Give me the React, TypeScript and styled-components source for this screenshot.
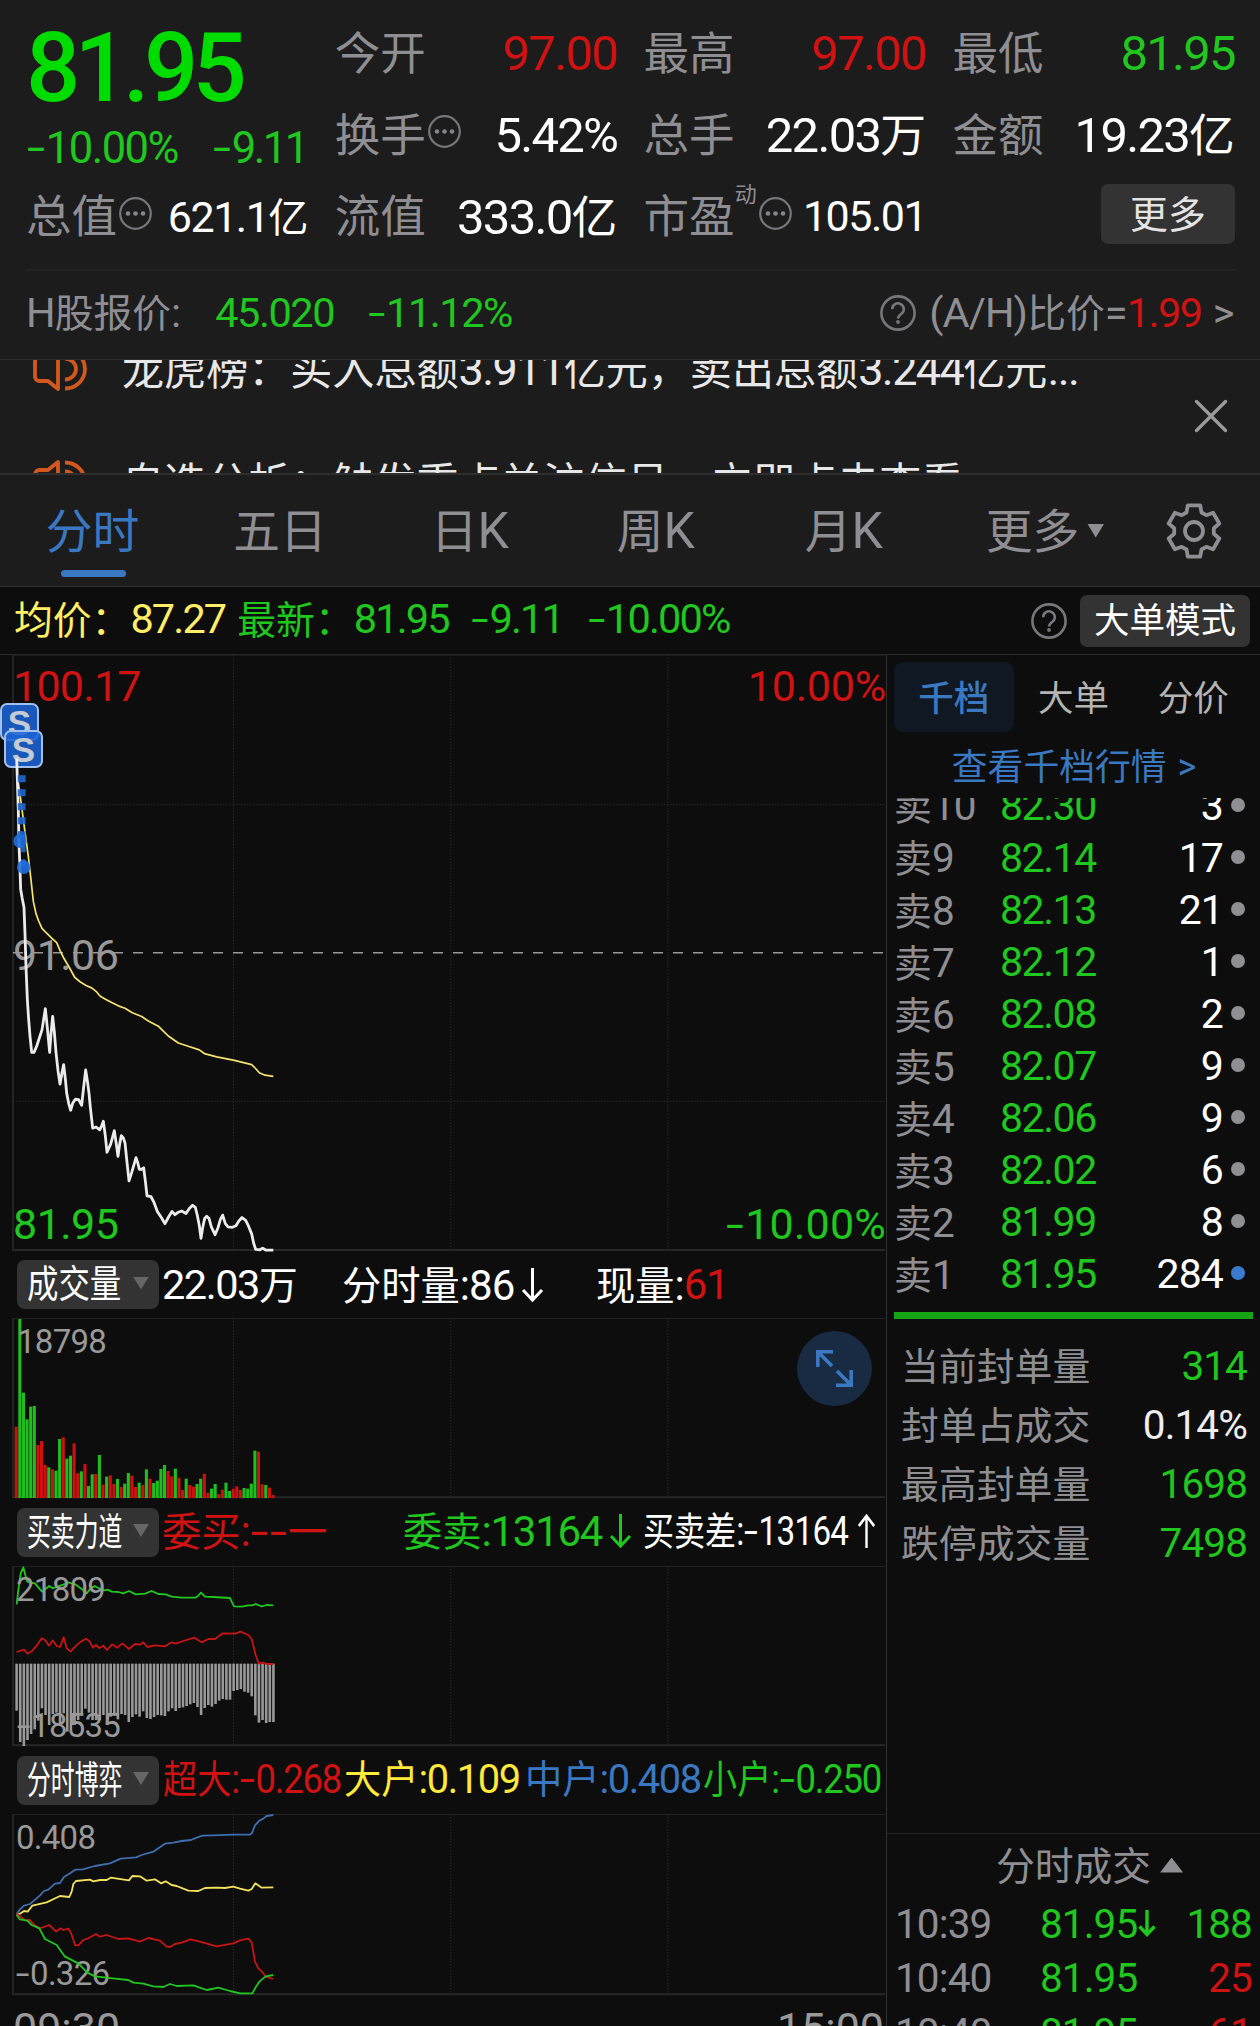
import React from "react";
import styled, { createGlobalStyle } from "styled-components";

const C = {
  head: "#1c1c1c",
  body: "#0d0d0d",
  gray: "#8e8e93",
  label: "#999999",
  red: "#d01212",
  green: "#1fc71f",
  blue: "#3a78c2",
  yellow: "#ffe93b",
  white: "#ffffff",
  line: "#2b2b2b",
  chip: "#333333",
};

const Global = createGlobalStyle`
  html, body { margin: 0; background: ${C.body}; }
  body { font-family: Roboto, "Noto Sans CJK SC", sans-serif; overflow: hidden; }
  * { box-sizing: border-box; }
`;

/* ---------- text ---------- */

const Txt = styled.span<{ $s: number; $c?: string; $ls?: number; $w?: number; $k?: number }>`
  display: inline-block;
  white-space: pre;
  line-height: 1;
  font-size: ${(p) => p.$s}px;
  color: ${(p) => p.$c || C.white};
  font-weight: ${(p) => p.$w || 400};
  letter-spacing: ${(p) => p.$ls ?? -0.035}em;
  ${(p) => (p.$k ? `transform: scaleX(${p.$k}); transform-origin: 0 50%;` : "")}
`;
const Han = styled.span`
  font-family: "Noto Sans CJK SC", sans-serif;
  font-size: 0.935em;
  letter-spacing: 0;
`;
const Dash = styled.span`
  display: inline-block;
  letter-spacing: 0;
  transform: scaleX(1.5);
  margin: 0 0.09em;
`;

type TProps = { children: string; s: number; c?: string; ls?: number; w?: number; k?: number };
function T({ children, s, c, ls, w, k }: TProps) {
  const parts = children.split(/([\u3000-\u9fff\uff00-\uffef]+|-)/).filter(Boolean);
  return (
    <Txt $s={s} $c={c} $ls={ls} $w={w} $k={k}>
      {parts.map((p, i) =>
        p === "-" ? <Dash key={i}>-</Dash> : /[\u3000-\uffef]/.test(p) ? <Han key={i}>{p}</Han> : p
      )}
    </Txt>
  );
}

/* ---------- icons ---------- */

const Svg = styled.svg`
  display: block;
  flex: none;
  overflow: visible;
`;

const MoreDots = () => (
  <Svg width="33" height="33" viewBox="0 0 33 33">
    <circle cx="16.5" cy="16.5" r="15.3" fill="none" stroke="#77777b" strokeWidth="2.2" />
    {[9, 16.5, 24].map((x) => (
      <circle key={x} cx={x} cy="16.5" r="2.3" fill="#85858a" />
    ))}
  </Svg>
);
const Question = () => (
  <Svg width="36" height="36" viewBox="0 0 36 36" fill="none" stroke="#77777b" strokeWidth="2.6">
    <circle cx="18" cy="18" r="16.6" />
    <path d="M12.2 14.2a5.8 5.8 0 1 1 9 4.8c-2 1.4-3.1 2.2-3.1 4.4" />
    <circle cx="18" cy="27" r="1.2" fill="#77777b" strokeWidth="1.4" />
  </Svg>
);
const Speaker = () => (
  <Svg width="56" height="46" viewBox="0 0 56 46" fill="none" stroke="#d2591e" strokeWidth="3.8" strokeLinejoin="round">
    <path d="M26 3v40l-10-8H7.500a4.500 4.500 0 0 1-4.500-4.500v-15a4.500 4.500 0 0 1 4.500-4.500H16z" />
    <path d="M33 12.500a11 10.500 0 0 1 0 21M33 3.500a20 19.500 0 0 1 0 39" />
  </Svg>
);
const Close = () => (
  <Svg width="32" height="32" viewBox="0 0 32 32" stroke="#999" strokeWidth="3.400" strokeLinecap="round">
    <path d="M1.500 1.500l29 29M30.500 1.500l-29 29" />
  </Svg>
);
const gearPath = (() => {
  const pts: string[] = [];
  for (let i = 0; i < 6; i++) {
    ([[-22, 20], [-13.5, 26.4], [13.5, 26.4], [22, 20]] as const).forEach(([d, r]) => {
      const a = ((i * 60 + d - 90) * Math.PI) / 180;
      pts.push(`${(29 + r * Math.cos(a)).toFixed(1)} ${(29 + r * Math.sin(a)).toFixed(1)}`);
    });
  }
  return `M${pts.join("L")}Z`;
})();
const Gear = () => (
  <Svg width="58" height="58" viewBox="0 0 58 58" fill="none" stroke={C.gray} strokeWidth="3.800">
    <path d={gearPath} strokeLinejoin="round" />
    <circle cx="29" cy="29" r="9" />
  </Svg>
);
const Arrow = ({ up, c, w = 21 }: { up?: boolean; c: string; w?: number }) => (
  <Svg width={w} height="34" viewBox="0 0 21 34" preserveAspectRatio="none" fill="none" stroke={c} strokeWidth="3">
    <path d={up ? "M10.500 34V2M1 12l9.500-10L20 12" : "M10.500 0v32M1 22l9.500 10L20 22"} />
  </Svg>
);
const SmallArrow = () => (
  <Svg width="18" height="27" viewBox="0 0 18 27" fill="none" stroke={C.green} strokeWidth="3.400">
    <path d="M9 0v24M1.500 16.500L9 24.500l7.500-8" />
  </Svg>
);
const Tri = styled.i<{ $w: number; $h: number; $c: string; $up?: boolean }>`
  flex: none;
  width: ${(p) => p.$w}px;
  height: ${(p) => p.$h}px;
  background: ${(p) => p.$c};
  clip-path: ${(p) => (p.$up ? "polygon(50% 0, 100% 100%, 0 100%)" : "polygon(0 0, 100% 0, 50% 100%)")};
`;

/* ---------- quote header ---------- */

const Page = styled.div`
  width: 1260px;
  height: 2026px;
  overflow: hidden;
  background: ${C.body};
`;
const Header = styled.header`
  height: 359px;
  padding: 13px 25px 0 26px;
  background: ${C.head};
`;
const Quote = styled.div`
  display: grid;
  grid-template-columns: repeat(4, 282.500px);
  column-gap: 26.300px;
  grid-template-rows: repeat(3, 81.500px);
`;
const PriceBlock = styled.div`
  grid-row: span 2;
`;
const BigPrice = styled.div`
  height: 108px;
  padding-top: 3px;
  display: flex;
  align-items: center;
`;
const Change = styled.div`
  height: 55px;
  display: flex;
  align-items: center;
  gap: 34px;
`;
const Metric = styled.div`
  display: flex;
  align-items: center;
  justify-content: space-between;
`;
const MetricName = styled.div`
  display: flex;
  align-items: center;
  svg { margin: -7px 0 0 2px; }
`;
const Sup = styled.div`
  margin: -44px 0 0 0;
  & + svg { margin-left: 2px; }
`;
const MoreCell = styled.div`
  display: flex;
  justify-content: flex-end;
  align-items: center;
  padding-bottom: 5px;
`;
const Button = styled.button<{ $w: number; $h: number }>`
  display: flex;
  align-items: center;
  justify-content: center;
  width: ${(p) => p.$w}px;
  height: ${(p) => p.$h}px;
  padding: 0 0 2px;
  border: 0;
  border-radius: 7px;
  background: ${C.chip};
`;
const HShare = styled.div`
  display: flex;
  align-items: center;
  height: 86px;
  margin-top: 11px;
  padding-right: 2px;
  border-top: 2px solid #232323;
`;
const Gap = styled.i<{ $w: number }>`
  flex: none;
  width: ${(p) => p.$w}px;
`;
const Push = styled.i`
  flex: 1;
`;

/* ---------- ticker ---------- */

const Ticker = styled.div`
  display: flex;
  justify-content: space-between;
  height: 114px;
  overflow: hidden;
  background: ${C.head};
  border-top: 1px solid ${C.line};
`;
const TickerList = styled.div`
  margin-top: -47px;
`;
const TickerItem = styled.div`
  display: flex;
  align-items: center;
  gap: 34px;
  height: 112.500px;
  padding-left: 32px;
`;
const CloseBox = styled.div`
  display: flex;
  align-items: center;
  padding: 0 33px 2px 0;
`;

/* ---------- period tabs ---------- */

const Tabs = styled.nav`
  display: flex;
  height: 114px;
  background: ${C.head};
  border-top: 2px solid #2e2e2e;
  border-bottom: 1px solid #303030;
  padding-left: 20px;
`;
const Tab = styled.div<{ $w: number }>`
  position: relative;
  display: flex;
  flex: none;
  align-items: center;
  justify-content: center;
  gap: 8px;
  width: ${(p) => p.$w}px;
`;
const Underline = styled.i`
  position: absolute;
  left: 41px;
  bottom: 9px;
  width: 65px;
  height: 7px;
  border-radius: 4px;
  background: ${C.blue};
`;
const Summary = styled.div`
  display: flex;
  align-items: center;
  height: 67px;
  padding: 0 10px 0 14px;
`;
const SummaryText = styled.div`
  display: flex;
  padding-bottom: 2px;
`;

/* ---------- body ---------- */

const Body = styled.main`
  display: flex;
  height: 1372px;
  border-top: 1px solid ${C.line};
`;
const Charts = styled.section`
  width: 886px;
`;
const Plot = styled.div<{ $h: number }>`
  position: relative;
  height: ${(p) => p.$h}px;
`;
const PlotLabel = styled.div<{ $y: number; $right?: boolean; $x?: number }>`
  position: absolute;
  top: ${(p) => p.$y}px;
  ${(p) => (p.$right ? "right: 0;" : `left: ${p.$x ?? 13}px;`)}
  display: flex;
  align-items: center;
  height: 40px;
  margin-top: -20px;
`;
const Badge = styled.div<{ $x: number; $y: number }>`
  position: absolute;
  left: ${(p) => p.$x}px;
  top: ${(p) => p.$y}px;
  display: flex;
  align-items: center;
  justify-content: center;
  width: 39px;
  height: 38px;
  border: 2px solid #a3c0ea;
  border-radius: 7px;
  background: rgba(28, 100, 212, 0.87);
  color: #c4cbd4;
  font: bold 35px/1 "Liberation Sans", sans-serif;
`;
const Expand = styled.button`
  position: absolute;
  right: 14px;
  top: 13px;
  display: flex;
  align-items: center;
  justify-content: center;
  width: 75px;
  height: 75px;
  padding: 0;
  border: 0;
  border-radius: 50%;
  background: #192b43;
`;
const InfoRow = styled.div<{ $h: number }>`
  display: flex;
  align-items: center;
  height: ${(p) => p.$h}px;
  padding-left: 17px;
`;
const Chip = styled.div`
  display: flex;
  align-items: center;
  justify-content: space-between;
  flex: none;
  width: 142px;
  height: 49px;
  padding: 0 10px 3px 10px;
  border-radius: 8px;
  background: ${C.chip};
`;
const ChipText = styled.div`
  width: 96px;
  display: flex;
`;
const Segment = styled.div<{ $w: number; $drop?: number }>`
  display: flex;
  align-items: center;
  flex: none;
  width: ${(p) => p.$w}px;
  padding-bottom: ${(p) => 3 - (p.$drop ?? 0)}px;
`;
const Axis = styled.div`
  display: flex;
  justify-content: space-between;
  height: 32px;
  overflow: hidden;
  padding: 13px 2px 0 13px;
`;

/* ---------- order book ---------- */

const Side = styled.aside`
  flex: 1;
  display: flex;
  flex-direction: column;
  overflow: hidden;
  border-left: 1px solid #333;
  & > * { flex: none; }
`;
const BookTabs = styled.div`
  display: flex;
  padding: 7px 7px 0;
`;
const BookTab = styled.div<{ $on?: boolean }>`
  flex: 1;
  display: flex;
  align-items: center;
  justify-content: center;
  height: 70px;
  padding-top: 1px;
  border-radius: 9px;
  background: ${(p) => (p.$on ? "#101923" : "transparent")};
`;
const BookLink = styled.div`
  display: flex;
  align-items: center;
  justify-content: center;
  gap: 11px;
  height: 66px;
  padding-top: 3px;
`;
const Book = styled.div`
  display: flex;
  flex-direction: column;
  justify-content: flex-end;
  height: 502.500px;
  overflow: hidden;
`;
const BookRow = styled.div`
  display: grid;
  grid-template-columns: 106px 1fr auto 15px;
  column-gap: 0;
  align-items: center;
  flex: none;
  height: 52.040px;
  padding: 0 15px 0 7px;
`;
const Dot = styled.i<{ $c: string }>`
  justify-self: end;
  width: 14px;
  height: 14px;
  border-radius: 50%;
  margin-top: -3px;
  background: ${(p) => p.$c};
`;
const Qty = styled.div`
  padding-right: 7px;
`;
const SellBar = styled.div`
  height: 7px;
  margin: 11px 7px 0;
  background: #16a316;
`;
const Stats = styled.div`
  padding: 18px 13px 0 14px;
  height: 514px;
`;
const StatRow = styled.div`
  display: flex;
  align-items: center;
  justify-content: space-between;
  height: 59px;
`;
const TradesHead = styled.div`
  display: flex;
  align-items: center;
  justify-content: center;
  gap: 9px;
  height: 64px;
  padding-left: 46px;
  padding-right: 14px;
  border-top: 1px solid #252525;
`;
const TradeRow = styled.div`
  display: grid;
  grid-template-columns: 145px 98px 1fr auto;
  align-items: center;
  height: 54.800px;
  padding: 0 8px 0 8px;
`;

/* ---------- chart data ---------- */

const PRICE =
  "50,290 52,340 55,420 57,500 60,560 62,610 66,630 72,655 75,720 78,800 82,880 86,930 90,970 95,1010 102,1010 110,995 118,975 126,955 136,903 142,950 149,1010 153,965 158,922 163,960 168,1010 174,1055 180,1088 186,1060 191,1040 196,1075 200,1110 206,1135 212,1152 218,1135 226,1125 236,1126 245,1140 251,1095 257,1053 263,1085 267,1110 271,1145 278,1196 288,1193 299,1200 305,1190 310,1179 316,1215 321,1255 332,1235 343,1202 349,1235 354,1265 359,1235 364,1214 370,1220 375,1232 381,1280 387,1325 395,1305 402,1285 408,1268 413,1280 418,1297 424,1297 431,1293 436,1325 441,1362 453,1364 462,1378 472,1400 484,1415 495,1430 506,1413 516,1400 525,1408 535,1402 545,1399 558,1405 568,1393 578,1385 586,1390 592,1410 598,1435 603,1466 608,1440 614,1417 620,1412 627,1417 634,1438 645,1457 654,1440 661,1420 668,1409 676,1430 684,1438 697,1439 708,1435 716,1424 726,1415 737,1422 745,1435 755,1455 761,1478 767,1493 780,1494 788,1490 798,1495 820,1495";
const AVG =
  "50,320 62,390 75,470 85,530 92,580 100,640 108,670 116,688 126,706 140,718 155,730 170,741 180,760 192,780 208,802 224,826 240,837 258,846 275,852 290,862 300,872 315,879 335,888 355,896 375,902 397,913 425,922 445,933 475,946 490,958 505,970 535,987 560,994 598,1004 613,1013 650,1021 700,1029 755,1040 766,1049 778,1060 795,1066 820,1069";
const SELL =
  "50,343 55,300 62,250 70,232 76,255 82,275 92,278 105,280 115,292 126,305 136,297 148,288 158,295 172,290 190,284 205,277 225,283 240,293 260,310 270,297 284,288 300,297 315,301 322,299 335,305 355,306 370,310 387,303 407,313 435,311 455,303 475,312 497,313 515,320 545,323 586,323 595,317 603,308 615,320 640,321 690,324 695,335 702,349 725,350 745,346 757,346 767,342 785,349 800,345 820,346";
const BUY =
  "50,486 72,479 83,491 97,482 110,467 125,445 135,450 147,467 158,451 170,468 180,471 191,442 200,475 212,485 225,470 240,457 258,446 268,453 279,473 288,465 298,474 310,467 321,480 336,463 352,473 367,460 387,477 405,462 420,464 430,457 442,471 465,466 495,469 515,457 528,461 550,453 583,443 605,457 625,447 645,447 668,430 705,431 722,425 745,435 755,447 767,495 776,520 790,518 800,522 820,522";
const MID =
  "50,522 60,508 72,497 90,492 102,482 120,466 132,453 145,449 165,431 180,429 192,411 210,400 226,389 248,388 285,378 330,370 362,356 408,352 425,345 460,335 475,325 495,311 520,308 545,303 573,300 590,293 608,287 640,286 700,284 750,284 756,279 765,256 778,242 790,236 800,228 820,225";
const BIG =
  "50,525 62,520 72,513 83,515 97,497 140,487 180,468 208,471 215,455 220,432 228,423 270,419 280,424 300,420 320,420 332,413 387,421 397,408 420,409 440,422 465,418 483,430 497,424 515,435 530,438 565,452 595,453 615,444 650,443 675,444 700,440 720,446 745,452 755,447 766,430 785,443 820,442";
const HUGE =
  "50,520 66,533 75,541 90,540 105,557 120,565 148,555 168,575 182,565 190,570 205,566 213,578 225,615 235,616 250,600 265,595 288,582 300,590 320,585 355,597 385,595 420,605 445,594 480,602 500,620 510,621 525,612 545,608 572,598 600,605 650,619 700,610 720,601 745,596 755,607 765,665 775,685 788,697 797,710 820,717";
const SMALL =
  "50,525 60,538 82,542 95,555 118,565 135,597 170,615 195,650 235,670 262,698 285,709 345,716 385,720 400,728 430,731 460,739 490,741 510,732 530,738 580,736 620,750 655,743 690,753 720,760 757,760 765,745 778,725 797,709 820,705";

const VOLUME =
  "r560 g237 g458 g538 g500 g498 r615 r603 r675 g682 r688 g692 g597 r592 g656 g647 r610 r700 g694 r672 g738 g703 r702 g645 r734 g710 r706 r732 g717 r741 g731 g699 r707 r741 g728 r735 g688 r716 g729 g722 g687 g675 r693 r709 g686 r713 r750 g716 r735 r740 g732 g716 r701 r758 g746 g732 r762 r749 g728 g753 r746 r739 r750 g744 g746 g731 g632 r635 r733 g735 r743 r765".split(" ");
const DIFF = [
  662, 756, 768, 750, 732, 718, 692, 655, 675, 705, 672, 668, 700, 670, 725, 722, 705, 690, 670, 656, 668, 690, 690, 690,
  675, 703, 680, 670, 688, 672, 675, 696, 681, 673, 680, 664, 684, 687, 681, 675, 676, 678, 664, 655, 663, 654, 652, 648,
  643, 639, 651, 675, 654, 645, 650, 642, 632, 627, 629, 629, 603, 600, 597, 605, 608, 619, 676, 698, 690, 699, 696, 696,
];

const Canvas = styled.svg`
  position: absolute;
  inset: 0;
  width: 886px;
  height: 100%;
  overflow: visible;
  polyline, line { vector-effect: non-scaling-stroke; fill: none; }
  polyline { stroke-linejoin: round; }
`;

function Frame({ y0, y1, rows = [] }: { y0: number; y1: number; rows?: number[] }) {
  return (
    <g stroke="#2a2a2a" strokeWidth="1">
      <line x1="39" x2="39" y1={y0} y2={y1} strokeWidth="2" stroke="#232323" />
      <line x1="39" x2="2655" y1={y0 + 1.5} y2={y0 + 1.5} stroke="#222" />
      <line x1="39" x2="2655" y1={y1 - 2.5} y2={y1 - 2.5} strokeWidth="2" stroke="#272727" />
      {[700.5, 1352.5, 2003.5].map((x) => (
        <line key={x} x1={x} x2={x} y1={y0} y2={y1} strokeDasharray="1.500 1.500" />
      ))}
      {rows.map((y) => (
        <line key={y} x1="39" x2="2655" y1={y} y2={y} strokeDasharray="1.500 1.500" />
      ))}
    </g>
  );
}

const asks: [string, string, string][] = [
  ["卖10", "82.30", "3"],
  ["卖9", "82.14", "17"],
  ["卖8", "82.13", "21"],
  ["卖7", "82.12", "1"],
  ["卖6", "82.08", "2"],
  ["卖5", "82.07", "9"],
  ["卖4", "82.06", "9"],
  ["卖3", "82.02", "6"],
  ["卖2", "81.99", "8"],
  ["卖1", "81.95", "284"],
];
const stats: [string, string, string][] = [
  ["当前封单量", "314", C.green],
  ["封单占成交", "0.14%", "#eeeeee"],
  ["最高封单量", "1698", C.green],
  ["跌停成交量", "7498", C.green],
];
const trades: [string, string, boolean, string, string][] = [
  ["10:39", "81.95", true, "188", C.green],
  ["10:40", "81.95", false, "25", C.red],
  ["10:40", "81.95", false, "61", C.red],
];

function IndicatorChip({ name, k }: { name: string; k: number }) {
  return (
    <Chip>
      <ChipText>
        <T s={40.5} k={k}>{name}</T>
      </ChipText>
      <Tri $w={16} $h={13} $c="#666" />
    </Chip>
  );
}

export default function App() {
  return (
    <Page>
      <Global />
      <Header>
        <Quote>
          <PriceBlock>
            <BigPrice>
              <T s={95.5} c="#00dc00" w={500} ls={-0.06}>81.95</T>
            </BigPrice>
            <Change>
              <T s={43.5} c={C.green}>-10.00%</T>
              <T s={43.5} c={C.green} ls={-0.055}>-9.11</T>
            </Change>
          </PriceBlock>
          <Metric>
            <T s={48.7} c={C.gray}>今开</T>
            <T s={49} c={C.red}>97.00</T>
          </Metric>
          <Metric>
            <T s={48.7} c={C.gray}>最高</T>
            <T s={49} c={C.red}>97.00</T>
          </Metric>
          <Metric>
            <T s={48.7} c={C.gray}>最低</T>
            <T s={49} c={C.green}>81.95</T>
          </Metric>
          <Metric>
            <MetricName>
              <T s={48.7} c={C.gray}>换手</T>
              <MoreDots />
            </MetricName>
            <T s={49}>5.42%</T>
          </Metric>
          <Metric>
            <T s={48.7} c={C.gray}>总手</T>
            <T s={49}>22.03万</T>
          </Metric>
          <Metric>
            <T s={48.7} c={C.gray}>金额</T>
            <T s={49}>19.23亿</T>
          </Metric>
          <Metric>
            <MetricName>
              <T s={48.7} c={C.gray}>总值</T>
              <MoreDots />
            </MetricName>
            <T s={43}>621.1亿</T>
          </Metric>
          <Metric>
            <T s={48.7} c={C.gray}>流值</T>
            <T s={49}>333.0亿</T>
          </Metric>
          <Metric>
            <MetricName>
              <T s={48.7} c={C.gray}>市盈</T>
              <Sup>
                <T s={23.5} c={C.gray}>动</T>
              </Sup>
              <MoreDots />
            </MetricName>
            <T s={43}>105.01</T>
          </Metric>
          <MoreCell>
            <Button $w={134} $h={60}>
              <T s={40.5} c="#e4e4e4">更多</T>
            </Button>
          </MoreCell>
        </Quote>
        <HShare>
          <T s={41.5} c={C.gray} ls={-0.022}>H股报价:</T>
          <Gap $w={35} />
          <T s={41.5} c={C.green}>45.020</T>
          <Gap $w={33} />
          <T s={41.5} c={C.green}>-11.12%</T>
          <Push />
          <Question />
          <Gap $w={13} />
          <T s={41.5} c={C.gray} ls={-0.022}>(A/H)比价=</T>
          <T s={41.5} c={C.red}>1.99</T>
          <Gap $w={11} />
          <T s={41.5} c={C.gray}>&gt;</T>
        </HShare>
      </Header>

      <Ticker>
        <TickerList>
          <TickerItem>
            <Speaker />
            <T s={45} c="#e8e8e8">龙虎榜：买入总额3.911亿元，卖出总额3.244亿元...</T>
          </TickerItem>
          <TickerItem>
            <Speaker />
            <T s={45} c="#e8e8e8">自选分析：触发重点关注信号，立即点击查看</T>
          </TickerItem>
        </TickerList>
        <CloseBox>
          <Close />
        </CloseBox>
      </Ticker>

      <Tabs>
        <Tab $w={145}>
          <T s={50} c={C.blue}>分时</T>
          <Underline />
        </Tab>
        <Tab $w={230}>
          <T s={50} c={C.gray}>五日</T>
        </Tab>
        <Tab $w={148}>
          <T s={50} c={C.gray}>日K</T>
        </Tab>
        <Tab $w={224}>
          <T s={50} c={C.gray}>周K</T>
        </Tab>
        <Tab $w={152}>
          <T s={50} c={C.gray}>月K</T>
        </Tab>
        <Tab $w={252}>
          <T s={50} c={C.gray}>更多</T>
          <Tri $w={17} $h={14} $c={C.gray} />
        </Tab>
        <Tab $w={46}>
          <Gear />
        </Tab>
      </Tabs>

      <Summary>
        <SummaryText>
          <T s={41.5} c="#ffee66">均价：</T>
          <T s={41.5} c="#ffee66" ls={-0.045}>87.27</T>
          <Gap $w={12} />
          <T s={41.5} c={C.green}>最新：</T>
          <T s={41.5} c={C.green} ls={-0.045}>81.95</T>
          <Gap $w={22} />
          <T s={41.5} c={C.green} ls={-0.045}>-9.11</T>
          <Gap $w={24} />
          <T s={41.5} c={C.green} ls={-0.045}>-10.00%</T>
        </SummaryText>
        <Push />
        <Question />
        <Gap $w={13} />
        <Button $w={170} $h={52}>
          <T s={38}>大单模式</T>
        </Button>
      </Summary>

      <Body>
        <Charts>
          <Plot $h={596}>
            <Canvas viewBox="0 36 2658 1461" preserveAspectRatio="none">
              <Frame y0={35} y1={1497} rows={[403, 1130]} />
              <line x1="39" x2="2655" y1="766" y2="766" stroke="#999" strokeWidth="1.500" strokeDasharray="10 10" />
            </Canvas>
            <PlotLabel $y={31}><T s={43} c={C.red} ls={-0.017}>100.17</T></PlotLabel>
            <PlotLabel $y={31} $right><T s={43} c={C.red} ls={-0.005}>10.00%</T></PlotLabel>
            <PlotLabel $y={300}><T s={43} c={C.label} ls={-0.012}>91.06</T></PlotLabel>
            <PlotLabel $y={569}><T s={43} c={C.green} ls={-0.012}>81.95</T></PlotLabel>
            <PlotLabel $y={569} $right><T s={43} c={C.green} ls={0.005}>-10.00%</T></PlotLabel>
            <Badge $x={0} $y={48}>S</Badge>
            <Badge $x={4} $y={75}>S</Badge>
            <Canvas viewBox="0 36 2658 1461" preserveAspectRatio="none">
              <polyline points={AVG} stroke="#f5e36e" strokeWidth="1.700" />
              <polyline points={PRICE} stroke="#ececec" strokeWidth="2.800" />
              <g stroke="#1f66d0" strokeWidth="4.500" strokeDasharray="7 7" opacity="0.900">
                <line x1="60" x2="60" y1="331" y2="490" />
                <line x1="70" x2="70" y1="331" y2="556" />
              </g>
              <ellipse cx="60" cy="492" rx="20" ry="17" fill="#1f6fe0" opacity="0.900" />
              <ellipse cx="71" cy="556" rx="20" ry="17" fill="#1f6fe0" opacity="0.900" />
            </Canvas>
          </Plot>

          <InfoRow $h={67}>
            <IndicatorChip name="成交量" k={0.83} />
            <Gap $w={3} />
            <Segment $w={180} $drop={3}><T s={41.5}>22.03万</T></Segment>
            <Segment $w={254} $drop={3}>
              <T s={42} ls={-0.022}>分时量:86</T>
              <Gap $w={8} />
              <Arrow c="#fff" />
            </Segment>
            <Segment $w={200} $drop={3}>
              <T s={42} ls={-0.022}>现量:</T>
              <T s={42} c={C.red}>61</T>
            </Segment>
          </InfoRow>
          <Plot $h={180}>
            <Canvas viewBox="0 234 2658 540" preserveAspectRatio="none">
              <Frame y0={234} y1={774} />
              {VOLUME.map((v, i) => {
                const top = Number(v.slice(1));
                return (
                  <rect key={i} x={44 + i * 10.85} y={top} width="9.300" height={774 - top} fill={v[0] === "r" ? "#cf1010" : "#1fbe1f"} />
                );
              })}
            </Canvas>
            <PlotLabel $y={23} $x={17}><T s={33} c={C.label} ls={-0.022}>18798</T></PlotLabel>
            <Expand>
              <Svg width="37" height="37" viewBox="0 0 37 37" fill="none" stroke={C.blue} strokeWidth="3.600">
                <path d="M17 1.800H1.800V17M2 2l14 14M20 35.200h15.200V20M35 35L21 21" />
              </Svg>
            </Expand>
          </Plot>

          <InfoRow $h={68}>
            <IndicatorChip name="买卖力道" k={0.63} />
            <Gap $w={3} />
            <Segment $w={241}><T s={42} c={C.red} ls={-0.022}>委买:--一</T></Segment>
            <Segment $w={240}>
              <T s={42} c={C.green} ls={-0.03}>委卖:13164</T>
              <Gap $w={8} />
              <Arrow c={C.green} />
            </Segment>
            <Segment $w={215}><T s={41.5} k={0.8} ls={-0.022}>买卖差:-13164</T></Segment>
            <Segment $w={20}><Arrow up c="#fff" w={17} /></Segment>
          </InfoRow>
          <Plot $h={180}>
            <Canvas viewBox="0 228 2658 540" preserveAspectRatio="none">
              <Frame y0={228} y1={768} />
              {DIFF.map((v, i) => (
                <rect key={i} x={46 + i * 10.85} y="521" width="7.800" height={v - 521} fill="#999" />
              ))}
              <polyline points={SELL} stroke={C.green} strokeWidth="1.800" />
              <polyline points={BUY} stroke="#c81414" strokeWidth="1.800" />
            </Canvas>
            <PlotLabel $y={23} $x={16}><T s={33} c={C.label} ls={-0.022}>21809</T></PlotLabel>
            <PlotLabel $y={159} $x={16}><T s={33} c={C.label} ls={-0.022}>-18535</T></PlotLabel>
          </Plot>

          <InfoRow $h={68}>
            <IndicatorChip name="分时博弈" k={0.63} />
            <Gap $w={4} />
            <Segment $w={181}><T s={41.5} c={C.red} k={0.88}>超大:-0.268</T></Segment>
            <Segment $w={181}><T s={41.5} c={C.yellow} k={0.96}>大户:0.109</T></Segment>
            <Segment $w={178}><T s={41.5} c={C.blue} k={0.96}>中户:0.408</T></Segment>
            <Segment $w={180}><T s={41.5} c={C.green} k={0.88}>小户:-0.250</T></Segment>
          </InfoRow>
          <Plot $h={180}>
            <PlotLabel $y={23} $x={16}><T s={33} c={C.label} ls={-0.022}>0.408</T></PlotLabel>
            <PlotLabel $y={159} $x={15}><T s={33} c={C.label} ls={-0.022}>-0.326</T></PlotLabel>
            <Canvas viewBox="0 222 2658 540" preserveAspectRatio="none">
              <Frame y0={222} y1={765} />
              <polyline points={MID} stroke="#3f6fae" strokeWidth="1.800" />
              <polyline points={BIG} stroke="#f3e25c" strokeWidth="1.800" />
              <polyline points={HUGE} stroke="#c81414" strokeWidth="1.800" />
              <polyline points={SMALL} stroke={C.green} strokeWidth="1.800" />
            </Canvas>
          </Plot>
          <Axis>
            <T s={43} c={C.label} ls={0}>09:30</T>
            <T s={43} c={C.label} ls={0}>15:00</T>
          </Axis>
        </Charts>

        <Side>
          <BookTabs>
            <BookTab $on><T s={38} c={C.blue} w={500}>千档</T></BookTab>
            <BookTab><T s={38} c="#b4b4b4">大单</T></BookTab>
            <BookTab><T s={38} c="#b4b4b4">分价</T></BookTab>
          </BookTabs>
          <BookLink>
            <T s={38.3} c={C.blue}>查看千档行情</T>
            <T s={36} c={C.blue}>&gt;</T>
          </BookLink>
          <Book>
            {asks.map(([n, p, q]) => (
              <BookRow key={n}>
                <T s={40.5} c={C.gray} ls={-0.022}>{n}</T>
                <T s={41} c={C.green}>{p}</T>
                <Qty><T s={41} ls={-0.022}>{q}</T></Qty>
                <Dot $c={n === "卖1" ? "#3a7bd0" : C.gray} />
              </BookRow>
            ))}
          </Book>
          <SellBar />
          <Stats>
            {stats.map(([n, v, c]) => (
              <StatRow key={n}>
                <T s={40.5} c={C.gray}>{n}</T>
                <T s={40.5} c={c} ls={-0.022}>{v}</T>
              </StatRow>
            ))}
          </Stats>
          <TradesHead>
            <T s={41.5} c={C.gray}>分时成交</T>
            <Tri $w={23} $h={15} $c={C.gray} $up />
          </TradesHead>
          {trades.map(([t, p, down, q, c], i) => (
            <TradeRow key={i}>
              <T s={40.5} c={C.gray} ls={-0.022}>{t}</T>
              <T s={40.5} c={C.green} ls={-0.022}>{p}</T>
              {down ? <SmallArrow /> : <i />}
              <T s={40.5} c={c} ls={-0.022}>{q}</T>
            </TradeRow>
          ))}
        </Side>
      </Body>
    </Page>
  );
}
